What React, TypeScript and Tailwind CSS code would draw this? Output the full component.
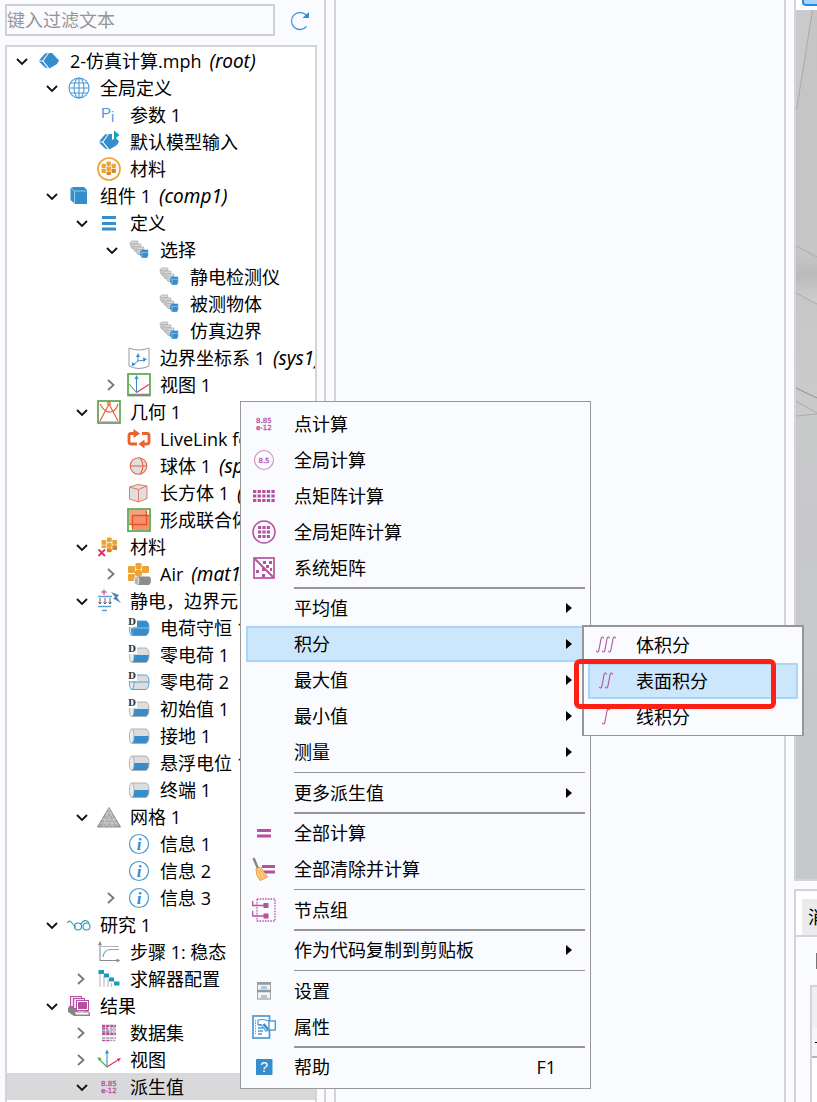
import { useState } from "react";
import type { ReactNode } from "react";

// ─── Tokens ──────────────────────────────────────────────────────────────────
const BLUE = "#368dcc";
const PURPLE = "#b452a0";
const ORANGE = "#eda436";
const RED = "#e8603c";
const GRAY = "#8c8c8c";
const GREEN = "#57a64a";
const TEAL = "#2099b8";

function Svg({ children, size = 24 }: { children: ReactNode; size?: number }) {
  return (
    <svg width={size} height={size} viewBox="0 0 24 24" fill="none" aria-hidden="true" className="shrink-0">
      {children}
    </svg>
  );
}

// ─── Shared glyph parts ──────────────────────────────────────────────────────
function Blocks({ x, y, s }: { x: number; y: number; s: number }) {
  const g = s + 0.6;
  return (
    <g fill={ORANGE}>
      <rect x={x} y={y + s * 0.5} width={s} height={s} rx="0.8" />
      <rect x={x + g} y={y} width={s} height={s} rx="0.8" />
      <rect x={x + g * 2} y={y + s * 0.5} width={s} height={s} rx="0.8" />
      <rect x={x} y={y + s * 0.5 + g} width={s} height={s} rx="0.8" />
      <rect x={x + g} y={y + g} width={s} height={s} rx="0.8" />
      <rect x={x + g * 2} y={y + s * 0.5 + g} width={s} height={s} rx="0.8" fill="#d9822b" />
      <rect x={x + g} y={y + g * 2} width={s} height={s * 0.8} rx="0.8" fill="#d9822b" />
    </g>
  );
}

function Cylinder({ kind, tag }: { kind: "full" | "half" | "line"; tag?: boolean }) {
  const top = kind === "full" ? BLUE : "#dcdddf";
  const bottom = kind === "line" ? "#dcdddf" : BLUE;
  const edge = kind === "half" ? "#a9abad" : "#4a9ad4";
  return (
    <Svg>
      <path d="M5 5H19Q22 6 22 12H7Q7 7 5 5Z" fill={top} />
      <path d="M7 12H22Q22 18 19 19.500H5Q7 17 7 12Z" fill={bottom} />
      <path d="M5 5H19Q22 6 22 12T19 19.500H5" stroke={edge} strokeWidth="0.9" />
      <ellipse cx="4.700" cy="12.200" rx="2.300" ry="7.300" fill="#eceded" stroke={edge} strokeWidth="0.9" />
      {kind === "full" && <path d="M4 12Q4 18 5 19Q7 17 7 12Z" fill={BLUE} />}
      {kind !== "half" && <path d="M3 12H22" stroke={kind === "full" ? "#9ccbee" : "#4a9ad4"} strokeWidth="0.900" />}
      {tag && (
        <>
          <rect x="0" y="0" width="10" height="11" fill="#fff" />
          <text x="1" y="8.500" fontFamily="DejaVu Serif, serif" fontWeight="bold" fontSize="9" fill="#333">D</text>
        </>
      )}
    </Svg>
  );
}

function Box({ x, y, blue }: { x: number; y: number; blue?: boolean }) {
  return (
    <g transform={`translate(${x} ${y})`}>
      <path d="M0 1.500L1.800 0H7.800V5.800L6.800 7.500H2Q0 6 0 1.500Z" fill={blue ? BLUE : "#dedede"} stroke={blue ? BLUE : "#a8a8a8"} strokeWidth="0.7" />
      <path d="M0.300 1.700L2 2.400H7.500M2 2.400V7.200" stroke={blue ? "#a5d0ee" : "#a8a8a8"} strokeWidth="0.7" />
    </g>
  );
}

function Diamond() {
  return (
    <g fill={BLUE}>
      <path d="M12 4H15L22 11.500L20 15L12.500 19.500L6.500 12Z" />
      <path d="M2 11.400L8 4.500L11 4L5.500 11.400Z" />
      <path d="M2 12.600H5.500L11 19.500L8 18.500Z" />
    </g>
  );
}

function Digits() {
  return (
    <g fill={PURPLE} stroke={PURPLE} strokeWidth="0.300" fontFamily="DejaVu Sans, sans-serif" fontSize="7">
      <text x="4" y="11">8.85</text>
      <text x="4" y="18">e-12</text>
    </g>
  );
}

function Axes() {
  return (
    <>
      <path d="M10 18V4" stroke={BLUE} strokeWidth="1.100" />
      <path d="M10 1.500L8 5.500H12Z" fill={BLUE} />
      <path d="M10 19L3 12" stroke={GREEN} strokeWidth="1.100" />
      <path d="M0.500 9L2 13L4.800 10.500Z" fill={GREEN} />
      <path d="M10 19L20 12.500" stroke="#d8356a" strokeWidth="1.100" />
      <path d="M24 10L19.500 10.800L21.500 14Z" fill="#d8356a" />
    </>
  );
}

function Integral({ n }: { n: number }) {
  return (
    <Svg>
      <g stroke={PURPLE} strokeWidth="1.100" strokeLinecap="round">
        {[0, 1, 2].slice(0, n).map((i) => (
          <path key={i} transform={`translate(${i * 6 - (n - 1) * 3} 0)`} d="M15.500 5Q14.500 3 13.200 5L10.800 17.500Q9.800 20 8.500 18.200" />
        ))}
      </g>
    </Svg>
  );
}

// ─── Icons ───────────────────────────────────────────────────────────────────
const Info = () => (
  <Svg>
    <circle cx="12" cy="12" r="9.500" stroke="#4a9ad4" strokeWidth="1.200" fill="#fff" />
    <text x="12" y="17.500" textAnchor="middle" fontFamily="Liberation Serif, serif" fontStyle="italic" fontWeight="bold" fontSize="17" fill={BLUE}>i</text>
  </Svg>
);

const Selection = () => (
  <Svg>
    <Box x={3} y={3} />
    <Box x={6} y={6} />
    <Box x={9} y={9} />
    <Box x={13} y={12} blue />
  </Svg>
);

const ICONS: Record<string, ReactNode> = {
  root: <Svg><Diamond /></Svg>,
  globe: (
    <Svg>
      <g stroke="#4a9ad4" strokeWidth="1.100">
        <circle cx="12" cy="12" r="10" />
        <ellipse cx="12" cy="12" rx="5" ry="10" />
        <path d="M12 2V22M2 12H22M3.500 7H20.500M3.500 17H20.500" />
      </g>
    </Svg>
  ),
  pi: (
    <Svg>
      <g fill="#4a9ad4" fontFamily="Liberation Sans, sans-serif">
        <text x="4" y="14.500" fontSize="15">P</text>
        <text x="14" y="18.500" fontSize="14">i</text>
      </g>
    </Svg>
  ),
  modelInput: (
    <Svg>
      <Diamond />
      <path d="M15 0L23 5L15 10Z" fill="#fff" />
      <path d="M17 0.500L22.500 5L17 9.500Z" fill="#0fa5b8" />
    </Svg>
  ),
  materials: (
    <Svg>
      <circle cx="12" cy="12" r="11" stroke={ORANGE} strokeWidth="1.700" />
      <Blocks x={4.5} y={4.5} s={4.4} />
    </Svg>
  ),
  component: (
    <Svg>
      <path d="M3.500 4L6.500 3H17L20 6V20H8L3.500 16Z" fill={BLUE} />
      <path d="M4 4.500L7.500 7H19.500M7.500 7V19.500" stroke="#a5d0ee" strokeWidth="0.9" />
    </Svg>
  ),
  definitions: <Svg><path d="M5 6.500H19M5 12.500H19M5 18H19" stroke={BLUE} strokeWidth="3" /></Svg>,
  selection: <Selection />,
  coords: (
    <Svg>
      <path d="M2 2Q12 6 22 2V20Q12 25 2 20Z" fill="#fff" stroke="#9a9a9a" />
      <path d="M11 15V9M11 15L18 14M11 15L7 18" stroke={BLUE} />
      <path d="M11 7L9 11H13ZM20 13L16 11.500L16.500 16ZM4.500 20L5.500 16L8.500 19Z" fill={BLUE} />
    </Svg>
  ),
  viewBox: (
    <Svg>
      <rect x="1" y="1" width="22" height="21.500" stroke={GREEN} strokeWidth="1.700" fill="#fff" />
      <path d="M2 21.500H22" stroke="#888" strokeWidth="1.500" />
      <path d="M9.500 19V5" stroke={BLUE} />
      <path d="M9.500 2L7.500 6H11.500Z" fill={BLUE} />
      <path d="M9.500 19.500L2 11" stroke={GREEN} strokeWidth="1.100" />
      <path d="M9.500 19.500L22 11.500" stroke="#d8356a" strokeWidth="1.100" />
    </Svg>
  ),
  geometry: (
    <Svg>
      <rect x="1" y="1" width="22" height="22" stroke={GREEN} strokeWidth="1.700" fill="#fff" />
      <path d="M2 22H22" stroke="#999" strokeWidth="1.200" />
      <g stroke={RED} strokeWidth="1.200">
        <circle cx="12" cy="3.500" r="1.300" />
        <path d="M11.500 5L3 21M12.500 5L21 21" />
        <path d="M3 4Q8 13 14 12Q19 11 21 4" />
      </g>
    </Svg>
  ),
  livelink: (
    <Svg>
      <g stroke="#e8622f" strokeWidth="2.800">
        <path d="M10 17H4Q2 17 2 15V8.500Q2 6.500 4 6.500H7" />
        <path d="M15 6.500H20Q22 6.500 22 8.500V15Q22 17 20 17H17" />
      </g>
      <path d="M6.500 2L13 6.500L6.500 11ZM17.500 12.500L11.500 17L17.500 21.500Z" fill="#e8622f" />
    </Svg>
  ),
  sphere: (
    <Svg>
      <circle cx="11.500" cy="12" r="8.300" fill="#dedfe1" />
      <g stroke={RED} strokeWidth="1.100">
        <circle cx="11.500" cy="12" r="8.300" />
        <path d="M3 12H20M13 4Q19 12 13 20" />
      </g>
    </Svg>
  ),
  block: (
    <Svg>
      <path d="M2.500 6L11 3.500L20 5V17.500L11.500 21L2.500 18Z" fill="#dedfe1" stroke="#e57a5c" />
      <path d="M2.500 6L11.500 8.500L20 5M11.500 8.500V21" stroke="#e57a5c" />
    </Svg>
  ),
  union: (
    <Svg>
      <rect x="1" y="1" width="22" height="22" stroke={GREEN} strokeWidth="1.700" fill="#fff" />
      <rect x="2" y="2" width="17.500" height="15" fill="#f4a183" />
      <rect x="5" y="7.500" width="17" height="14.500" fill="#f2916f" />
      <path d="M2.500 16.500H19.500V2.500M5.500 21V7.500H22" stroke="#e8521f" strokeWidth="1.300" />
    </Svg>
  ),
  materialsError: (
    <Svg>
      <Blocks x={4.500} y={2.5} s={4.8} />
      <rect x="0" y="13" width="9" height="9" fill="#fff" />
      <path d="M1.500 14.500L8 21M8 14.500L1.500 21" stroke="#d8305c" strokeWidth="1.800" />
    </Svg>
  ),
  air: (
    <Svg>
      <g fill={ORANGE}>
        <rect x="8.500" y="1" width="6" height="6" rx="1" />
        <rect x="1" y="4" width="7" height="7" rx="1" />
        <rect x="15" y="4" width="7" height="7" rx="1" />
        <circle cx="11.500" cy="11" r="3.700" />
        <rect x="1" y="12" width="7" height="7" rx="1" />
      </g>
      <path d="M9 14.500H22Q24 15 24 18.500T22 23H9Z" fill="#8b8c8c" />
      <ellipse cx="9.500" cy="18.700" rx="2.300" ry="4.200" fill="#b5b6b6" stroke="#fff" strokeWidth="0.800" />
    </Svg>
  ),
  electro: (
    <Svg>
      <path d="M7 0.500V6M4 3H10" stroke="#d8356a" strokeWidth="1.100" />
      <path d="M1 7.500H15M1 17.500H14M5 21.500H10" stroke="#5aa2d6" strokeWidth="1.300" />
      <path d="M3 9V15M8 9V15M13 9V15M1.500 13L3 15L4.500 13M6.500 13L8 15L9.500 13M11.500 13L13 15L14.500 13" stroke="#555" strokeWidth="0.900" />
      <path d="M14 3L22 6L20 8.500L24 14L16 9.500L18 8Z" fill="#4a86c8" />
    </Svg>
  ),
  dFull: <Cylinder kind="full" tag />,
  dHalf: <Cylinder kind="half" tag />,
  dLine: <Cylinder kind="line" tag />,
  half: <Cylinder kind="half" />,
  mesh: (
    <Svg>
      <path d="M12 2.500L23.500 22H0.500Z" fill="#a9a9a9" stroke={GRAY} />
      <path d="M8.500 8L15 8M5 14.500H19M3 18H21M9 8L17 22M12 3L6 22M15 8L8 22M18 13L13 22M6 13L12 22M12 4L20 21" stroke="#d9d9d9" strokeWidth="0.600" />
    </Svg>
  ),
  info: <Info />,
  study: (
    <Svg>
      <g stroke={TEAL} strokeWidth="1.100">
        <path d="M0.500 10Q2 6 5 10T9 14" />
        <circle cx="11" cy="13.500" r="3.500" />
        <circle cx="19.500" cy="13.500" r="3.500" />
        <path d="M14 11Q17 5 22 9.500" />
      </g>
    </Svg>
  ),
  step: (
    <Svg>
      <path d="M3 3V20.500H21" stroke={GRAY} strokeWidth="1.100" />
      <path d="M3 1L1 5H5ZM23.500 20.500L19.500 18.500V22.500Z" fill={GRAY} />
      <path d="M4 6.500H22" stroke="#b5b5b5" />
      <path d="M6 17Q7 10 13 9.500H22" stroke="#62b3cb" strokeWidth="1.200" />
    </Svg>
  ),
  solver: (
    <Svg>
      <path d="M3 5V20M7 8V20M11 12V20M14.500 16V20" stroke="#c4c4c4" strokeWidth="1.300" />
      <path d="M1.500 3H7V7H1.500ZM7 6.500H12V10.500H7ZM12 10.500H17V14.500H12ZM17 14.500H22.500V18.500H17Z" fill={TEAL} />
    </Svg>
  ),
  results: (
    <Svg>
      <path d="M1 14L4 10L12 19L20 17L23 19V22H7L1 18Z" fill="#858585" />
      <g stroke={PURPLE} fill="#f3dff0">
        <rect x="3.500" y="2.500" width="11" height="10" />
        <rect x="6.500" y="4.500" width="11" height="10" />
        <rect x="9.500" y="6.500" width="12" height="10" fill="#fff" />
      </g>
      <rect x="11" y="8" width="9" height="7" fill={PURPLE} />
      <path d="M7 18H22V21H9Z" fill="#fff" stroke={GRAY} />
    </Svg>
  ),
  dataset: (
    <Svg>
      <path d="M5 5H19M5 13H19" stroke={PURPLE} strokeWidth="2.500" strokeDasharray="3.400 0.700" />
      <path d="M5 9H19M5 17H19" stroke="#999" strokeWidth="1.600" strokeDasharray="3.400 0.700" />
      <path d="M5 7.200H11M5 11H13M5 19.500H13" stroke={PURPLE} strokeWidth="1.500" strokeDasharray="3.400 0.700" />
      <path d="M13 7.200H19M13 11H19M13 19.500H19" stroke="#aaa" strokeWidth="1.500" strokeDasharray="2 0.700" />
    </Svg>
  ),
  axes: <Svg><Axes /></Svg>,
  digits: <Svg><Digits /></Svg>,
  globalEval: (
    <Svg>
      <circle cx="12" cy="12" r="9.500" stroke="#cf8fc3" strokeWidth="1.100" />
      <text x="12" y="14.500" textAnchor="middle" fontFamily="DejaVu Sans, sans-serif" fontSize="7" fill={PURPLE} stroke={PURPLE} strokeWidth="0.300">8.5</text>
    </Svg>
  ),
  pointMatrix: (
    <Svg>
      <path d="M1 7.500H23M1 12H23M1 16.500H23" stroke={PURPLE} strokeWidth="3.200" strokeDasharray="3.300 1.300" />
    </Svg>
  ),
  globalMatrix: (
    <Svg>
      <circle cx="12" cy="12" r="11" stroke={PURPLE} strokeWidth="1.500" />
      <path d="M6 7.500H18.500M6 12H18.500M6 16.500H18.500" stroke={PURPLE} strokeWidth="3.200" strokeDasharray="3.200 1.200" />
    </Svg>
  ),
  systemMatrix: (
    <Svg>
      <rect x="2" y="2" width="20" height="20" stroke={PURPLE} strokeWidth="1.700" />
      <path d="M3 3L21 21" stroke={PURPLE} strokeWidth="1.900" />
      <path d="M11 5H14V8H11ZM17 5H20V8H17ZM14 9H17V12H14ZM18 12H20V15H18ZM4 14H7V17H4ZM10 12H13V15H10ZM10 18H13V21H10Z" fill={PURPLE} />
    </Svg>
  ),
  equals: <Svg><path d="M5 9.500H19M5 15H19" stroke={PURPLE} strokeWidth="3" /></Svg>,
  sweep: (
    <Svg>
      <path d="M10 9.500H23M10 15H23" stroke={PURPLE} strokeWidth="2.800" />
      <path d="M1.500 1L6 11.500" stroke="#858585" strokeWidth="2.400" />
      <path d="M4 11.500L8.500 10L15.500 20L8 23.500Q3.500 18 4 11.500Z" fill="#ffd08a" stroke="#e59a3c" />
      <path d="M6.500 13L9.500 22M8 12L13 20" stroke="#e59a3c" strokeWidth="0.700" />
    </Svg>
  ),
  group: (
    <Svg>
      <rect x="5" y="1" width="18" height="22" stroke={PURPLE} strokeWidth="1.300" strokeDasharray="1.500 1.200" />
      <path d="M0.700 3V7.500H13M0.700 13V18H13" stroke={PURPLE} strokeWidth="1.300" />
      <rect x="11.500" y="5" width="5" height="5" fill={PURPLE} />
      <rect x="11.500" y="15.500" width="5" height="5" fill={PURPLE} />
    </Svg>
  ),
  settings: (
    <Svg>
      <rect x="5.500" y="3.500" width="13" height="16.500" fill="#f4f4f4" stroke="#a5a5a5" />
      <path d="M5 4.500H19M5 12H19" stroke="#999" strokeWidth="2.500" />
      <path d="M9 8.500H15M9 17.500H15" stroke="#9dcbee" strokeWidth="3.200" />
      <path d="M5 20H19" stroke="#b5b5b5" />
    </Svg>
  ),
  properties: (
    <Svg>
      <rect x="1" y="1" width="16.500" height="22" fill="#fff" stroke="#4a9ad4" strokeWidth="1.700" />
      <path d="M3.500 5V19" stroke="#4a9ad4" strokeDasharray="1.300 1.300" />
      <path d="M6 10H10M6 13H11M6 16H11M6 19H10" stroke="#4a9ad4" strokeWidth="1.500" />
      <path d="M6 5Q12 3.500 18 6.500V15L14 16L9 9.500H6Z" fill="#fff" stroke="#4a9ad4" strokeWidth="1.200" />
      <path d="M11.500 9L16 14.500" stroke={BLUE} strokeWidth="2.500" />
      <rect x="17" y="6" width="6.300" height="9" fill="#fff" stroke="#4a9ad4" strokeWidth="1.400" />
    </Svg>
  ),
  help: (
    <Svg>
      <rect x="4" y="4" width="16.500" height="16" rx="0.800" fill={BLUE} />
      <text x="12.200" y="17" textAnchor="middle" fontFamily="Liberation Sans, sans-serif" fontSize="14" fill="#fff">?</text>
    </Svg>
  ),
  int1: <Integral n={1} />,
  int2: <Integral n={2} />,
  int3: <Integral n={3} />,
};

// ─── Data ────────────────────────────────────────────────────────────────────
type Node = { depth: number; icon: string; label: string; tag?: string; open?: boolean };

const INDENT = ["pl-0", "pl-[30px]", "pl-[60px]", "pl-[90px]", "pl-[120px]"];

const NODES: Node[] = [
  { depth: 0, icon: "root", label: "2-仿真计算.mph", tag: "(root)", open: true },
  { depth: 1, icon: "globe", label: "全局定义", open: true },
  { depth: 2, icon: "pi", label: "参数 1" },
  { depth: 2, icon: "modelInput", label: "默认模型输入" },
  { depth: 2, icon: "materials", label: "材料" },
  { depth: 1, icon: "component", label: "组件 1", tag: "(comp1)", open: true },
  { depth: 2, icon: "definitions", label: "定义", open: true },
  { depth: 3, icon: "selection", label: "选择", open: true },
  { depth: 4, icon: "selection", label: "静电检测仪" },
  { depth: 4, icon: "selection", label: "被测物体" },
  { depth: 4, icon: "selection", label: "仿真边界" },
  { depth: 3, icon: "coords", label: "边界坐标系 1", tag: "(sys1)" },
  { depth: 3, icon: "viewBox", label: "视图 1", open: false },
  { depth: 2, icon: "geometry", label: "几何 1", open: true },
  { depth: 3, icon: "livelink", label: "LiveLink for" },
  { depth: 3, icon: "sphere", label: "球体 1", tag: "(sph1)" },
  { depth: 3, icon: "block", label: "长方体 1", tag: "(blk1)" },
  { depth: 3, icon: "union", label: "形成联合体" },
  { depth: 2, icon: "materialsError", label: "材料", open: true },
  { depth: 3, icon: "air", label: "Air", tag: "(mat1)", open: false },
  { depth: 2, icon: "electro", label: "静电，边界元", open: true },
  { depth: 3, icon: "dFull", label: "电荷守恒 1" },
  { depth: 3, icon: "dHalf", label: "零电荷 1" },
  { depth: 3, icon: "dLine", label: "零电荷 2" },
  { depth: 3, icon: "dHalf", label: "初始值 1" },
  { depth: 3, icon: "half", label: "接地 1" },
  { depth: 3, icon: "half", label: "悬浮电位 1" },
  { depth: 3, icon: "half", label: "终端 1" },
  { depth: 2, icon: "mesh", label: "网格 1", open: true },
  { depth: 3, icon: "info", label: "信息 1" },
  { depth: 3, icon: "info", label: "信息 2" },
  { depth: 3, icon: "info", label: "信息 3", open: false },
  { depth: 1, icon: "study", label: "研究 1", open: true },
  { depth: 2, icon: "step", label: "步骤 1: 稳态" },
  { depth: 2, icon: "solver", label: "求解器配置", open: false },
  { depth: 1, icon: "results", label: "结果", open: true },
  { depth: 2, icon: "dataset", label: "数据集", open: false },
  { depth: 2, icon: "axes", label: "视图", open: false },
  { depth: 2, icon: "digits", label: "派生值", open: true },
];

type Item = { label: string; icon?: string; sub?: boolean; shortcut?: string };

const MENU: Item[][] = [
  [
    { label: "点计算", icon: "digits" },
    { label: "全局计算", icon: "globalEval" },
    { label: "点矩阵计算", icon: "pointMatrix" },
    { label: "全局矩阵计算", icon: "globalMatrix" },
    { label: "系统矩阵", icon: "systemMatrix" },
  ],
  [
    { label: "平均值", sub: true },
    { label: "积分", sub: true },
    { label: "最大值", sub: true },
    { label: "最小值", sub: true },
    { label: "测量", sub: true },
  ],
  [{ label: "更多派生值", sub: true }],
  [
    { label: "全部计算", icon: "equals" },
    { label: "全部清除并计算", icon: "sweep" },
  ],
  [{ label: "节点组", icon: "group" }],
  [{ label: "作为代码复制到剪贴板", sub: true }],
  [
    { label: "设置", icon: "settings" },
    { label: "属性", icon: "properties" },
  ],
  [{ label: "帮助", icon: "help", shortcut: "F1" }],
];

const SUBMENU: Item[] = [
  { label: "体积分", icon: "int3" },
  { label: "表面积分", icon: "int2" },
  { label: "线积分", icon: "int1" },
];

// ─── Tree ────────────────────────────────────────────────────────────────────
function TreeRow({ node, selected, onSelect }: { node: Node; selected: boolean; onSelect: () => void }) {
  return (
    <li
      role="treeitem"
      aria-expanded={node.open}
      aria-selected={selected}
      onClick={onSelect}
      className={`flex h-[27px] items-center whitespace-nowrap ${INDENT[node.depth]} ${selected ? "bg-[#d9d9db]" : ""}`}
    >
      <span className="flex w-[30px] shrink-0 justify-center">
        {node.open !== undefined && (
          <button type="button" aria-label={node.open ? "折叠" : "展开"} className="flex">
            <svg width="14" height="14" viewBox="0 0 14 14" fill="none">
              {node.open
                ? <path d="M2 5L7 10L12 5" stroke="#111" strokeWidth="1.800" />
                : <path d="M3 2L8.500 7L3 12" stroke="#777" strokeWidth="1.800" />}
            </svg>
          </button>
        )}
      </span>
      {ICONS[node.icon]}
      <span className="pl-[9px]">{node.label}</span>
      {node.tag && <i className="pl-2 font-['Noto_Sans',sans-serif] text-[19px]">{node.tag}</i>}
    </li>
  );
}

// ─── Menus ───────────────────────────────────────────────────────────────────
function MenuItem({ item, active }: { item: Item; active?: boolean }) {
  return (
    <button
      type="button"
      role="menuitem"
      aria-haspopup={item.sub ? "menu" : undefined}
      className={`flex h-9 w-full items-center border-2 pr-[11px] pl-1 text-left whitespace-nowrap ${active ? "border-[#a8d5f8] bg-[#cce6fb]" : "border-transparent"}`}
    >
      <span className="flex w-6 shrink-0">{item.icon && ICONS[item.icon]}</span>
      <span className="flex-1 pl-[18px]">{item.label}</span>
      {item.shortcut && <span className="pr-4">{item.shortcut}</span>}
      {item.sub && (
        <svg width="6" height="10" viewBox="0 0 6 10"><path d="M0 0L6 5L0 10Z" fill="#000" /></svg>
      )}
    </button>
  );
}

function ContextMenu() {
  return (
    <div role="menu" className="absolute top-[401px] left-[240px] w-[351px] border border-[#999] bg-[#fafbff] px-[5px] pt-1 pb-[3px]">
      {MENU.map((group, i) => (
        <div key={i}>
          {i > 0 && (
            <div className={i % 2 === 1 ? "flex h-1 items-center pl-12" : "flex h-[5px] items-center pl-12"}>
              <hr className={`w-full border-[#969696] ${i % 2 === 1 ? "border-t-2" : "border-t"}`} />
            </div>
          )}
          {group.map((item) => <MenuItem key={item.label} item={item} active={item.label === "积分"} />)}
        </div>
      ))}
    </div>
  );
}

function SubMenu() {
  return (
    <div role="menu" className="absolute top-[625px] left-[582px] w-[222px] border-2 border-b border-[#969696] bg-[#fafbff] px-1">
      {SUBMENU.map((item) => <MenuItem key={item.label} item={item} active={item.label === "表面积分"} />)}
    </div>
  );
}

// ─── Right side ──────────────────────────────────────────────────────────────
function Graphics() {
  return (
    <svg viewBox="0 0 21 870" preserveAspectRatio="xMinYMin slice" className="h-full w-full" aria-hidden="true">
      <defs>
        <linearGradient id="scene" x1="0" y1="0" x2="0" y2="1">
          <stop offset="0" stopColor="#c5c5c5" />
          <stop offset="0.280" stopColor="#c5c6c5" />
          <stop offset="0.430" stopColor="#c9cac9" />
          <stop offset="0.600" stopColor="#c8c8cb" />
          <stop offset="0.720" stopColor="#c7c9cd" />
          <stop offset="0.850" stopColor="#c5c9cb" />
          <stop offset="1" stopColor="#c5c9cb" />
        </linearGradient>
        <linearGradient id="band" x1="0" y1="0" x2="0" y2="1">
          <stop offset="0" stopColor="#c8c9c8" />
          <stop offset="0.500" stopColor="#bbbbbb" />
          <stop offset="1" stopColor="#d0d0d0" />
        </linearGradient>
      </defs>
      <rect width="21" height="870" fill="url(#scene)" />
      <path d="M0 0H16L0 100Z" fill="#cacaca" />
      <path d="M0 236L21 247V294L0 283Z" fill="url(#band)" />
      <g fill="none" stroke="#aaaaaa">
        <path d="M16.500 0L0.500 100M0 236L21 247M0 283L21 294M0 391L21 403M0 406L21 404" />
        <path d="M0 378L21 388" stroke="#8e8e8e" />
      </g>
    </svg>
  );
}

function RightColumn() {
  return (
    <div className="flex w-[23px] shrink-0 flex-col gap-2">
      <section aria-label="图形" className="flex h-[881px] flex-col border-b-2 border-l-2 border-[#d4d4d6]">
        <div className="h-[10px] shrink-0 overflow-hidden bg-white pl-1.5">
          <button type="button" aria-label="视图工具" className="block h-1.5 w-8 rounded-b-sm border-2 border-t-0 border-[#1c8fea] bg-[#a9d3f8]" />
        </div>
        <div className="min-h-0 flex-1"><Graphics /></div>
      </section>
      <section aria-label="消息" className="flex min-h-0 flex-1 flex-col overflow-hidden border-t-2 border-l-2 border-[#d4d4d6]">
        <div className="flex h-[46px] shrink-0 items-end border-b-2 border-[#d4d4d6] bg-white pl-1.5">
          <button type="button" className="h-9 w-[60px] shrink-0 bg-[#ebebeb] pl-1.5 text-left">消息</button>
        </div>
        <div className="flex h-12 shrink-0 items-center pl-5">
          <span className="h-4 w-4 shrink-0 border border-[#777]" />
        </div>
        <div className="ml-3.5 flex w-40 flex-1 flex-col border-t-2 border-l-2 border-[#d4d4d6] bg-white">
          <div className="h-[41px] bg-[#f0f0f0]" />
          <div className="flex h-[30px] items-center border-b-2 border-[#b5b5b5] bg-[#f7f7f7] pl-[3px]">
            <span className="h-px w-3 bg-black" />
          </div>
        </div>
      </section>
    </div>
  );
}

// ─── App ─────────────────────────────────────────────────────────────────────
export default function App() {
  const [selected, setSelected] = useState(NODES.length - 1);
  const [filter, setFilter] = useState("");

  return (
    <div className="relative flex h-screen gap-2 overflow-hidden bg-[#fafbff] font-['Open_Sans','Noto_Sans_CJK_SC',sans-serif] text-[18px] leading-6 text-black">
      <aside className="flex w-[326px] shrink-0 flex-col border-r-2 border-[#d4d4d6] pt-1 pl-[5px]">
        <div className="mb-[9px] flex shrink-0 items-center gap-[13px]">
          <input
            aria-label="键入过滤文本"
            placeholder="键入过滤文本"
            value={filter}
            onChange={(e) => setFilter(e.target.value)}
            className="h-8 w-[270px] border-2 border-[#d0d0d2] bg-[#fafbff] outline-none placeholder:text-[#959595]"
          />
          <button type="button" aria-label="刷新" className="flex">
            <Svg>
              <path d="M18.500 7.500A8.500 8.500 0 1 0 18.500 18.500" stroke="#4a9ad4" strokeWidth="1.300" />
              <path d="M21 4V10H14.500Z" fill={BLUE} />
            </Svg>
          </button>
        </div>
        <ul role="tree" className="mr-[7px] min-h-0 flex-1 overflow-hidden border-2 border-b-0 border-[#d4d4d6] bg-white">
          {NODES.map((n, i) => (
            <TreeRow key={i} node={n} selected={i === selected} onSelect={() => setSelected(i)} />
          ))}
        </ul>
      </aside>
      <main className="flex-1 border-x-2 border-[#d4d4d6]" />
      <RightColumn />

      <ContextMenu />
      <SubMenu />
      <div className="pointer-events-none absolute top-[659px] left-[574px] h-[50px] w-[202px] rounded-md border-5 border-[#ff2015]" />
    </div>
  );
}
